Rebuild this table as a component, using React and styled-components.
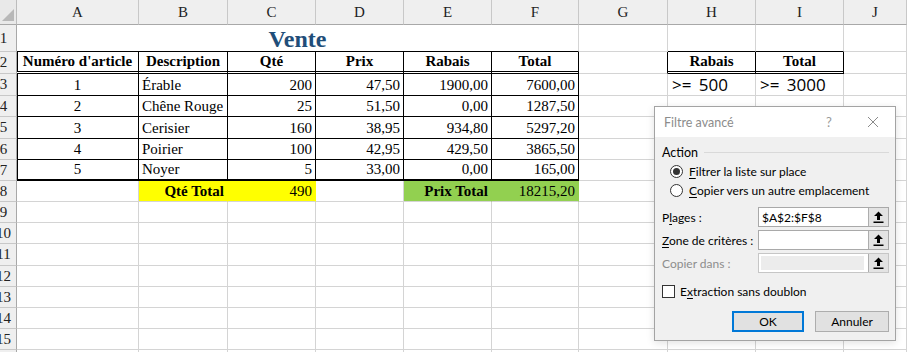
import React from 'react';
import styled, { createGlobalStyle } from 'styled-components';

const GlobalStyle = createGlobalStyle`
  body {
    margin: 0;
    overflow: hidden;
    background: #fff;
  }
`;

// row-header column, then A..I; J takes what is left
const COLS = [17, 122, 89, 88, 88, 88, 87, 89, 88, 88];
const ROWS = [25, 27, 22, 22, 21, 22, 21, 21, 21, 21, 21, 22, 21, 21, 21, 21, 21];
const LETTERS = ['A', 'B', 'C', 'D', 'E', 'F', 'G', 'H', 'I', 'J'];

const GRID = '#d4d4d4';
const INK = '#000';

const Screen = styled.div`
  position: relative;
  width: 907px;
  height: 352px;
  overflow: hidden;
`;

const Sheet = styled.div`
  display: grid;
  grid-template-columns: ${COLS.map((w) => `${w}px`).join(' ')} 1fr;
  grid-template-rows: ${ROWS.map((h) => `${h}px`).join(' ')};
  font-family: 'Liberation Serif', 'Times New Roman', serif;
  font-size: 15px;
  color: #000;
`;

const Corner = styled.div`
  box-sizing: border-box;
  background: #e9e9e9;
  border-right: 1px solid #bcbcbc;
  border-bottom: 1px solid #a8a8a8;
  display: flex;
  align-items: flex-end;
  justify-content: flex-end;
  padding: 0 2px 3px 0;
`;

const ColHead = styled.div`
  box-sizing: border-box;
  background: #efefef;
  border-right: 1px solid #c8c8c8;
  border-bottom: 1px solid #a8a8a8;
  display: flex;
  align-items: center;
  justify-content: center;
  color: #222;
  padding-top: 1px;
`;

const RowHead = styled.div`
  box-sizing: border-box;
  background: #efefef;
  border-right: 1px solid #a8a8a8;
  border-bottom: 1px solid #c8c8c8;
  overflow: hidden;
  display: flex;
  align-items: center;
  color: #222;

  span {
    display: block;
    flex-shrink: 0;
    width: 27px;
    margin-left: -10px;
    text-align: center;
  }
`;

const Cell = styled.div`
  box-sizing: border-box;
  grid-column: span ${(p) => p.$span || 1};
  display: flex;
  align-items: flex-end;
  justify-content: ${(p) =>
    p.$align === 'right' ? 'flex-end' : p.$align === 'center' ? 'center' : 'flex-start'};
  padding: 0 3px 1px;
  overflow: hidden;
  white-space: nowrap;
  background: ${(p) => p.$bg || '#fff'};
  border-right: 1px solid ${(p) => p.$r || GRID};
  border-bottom: ${(p) => p.$b || `1px solid ${GRID}`};
  box-shadow: ${(p) => (p.$l ? `inset 1px 0 0 ${INK}` : 'none')};
  font-weight: ${(p) => (p.$bold ? 700 : 400)};
`;

const Title = styled(Cell)`
  align-items: center;
  justify-content: center;
  padding: 2px 0 0;
  color: #1f4e79;
  font-size: 24px;
  font-weight: 700;
`;

const Criteria = styled(Cell)`
  font-family: 'Open Sans', 'Noto Sans', sans-serif;
  font-size: 17px;
  padding-left: 4px;
  padding-bottom: 0;
  align-items: center;
  word-spacing: 3px;
`;

const Tri = () => (
  <svg width="12" height="12" viewBox="0 0 12 12">
    <polygon points="12,0 12,12 0,12" fill="#b8b8b8" />
  </svg>
);

const head = ['Numéro d\'article', 'Description', 'Qté', 'Prix', 'Rabais', 'Total'];
const items = [
  ['1', 'Érable', '200', '47,50', '1900,00', '7600,00'],
  ['2', 'Chêne Rouge', '25', '51,50', '0,00', '1287,50'],
  ['3', 'Cerisier', '160', '38,95', '934,80', '5297,20'],
  ['4', 'Poirier', '100', '42,95', '429,50', '3865,50'],
  ['5', 'Noyer', '5', '33,00', '0,00', '165,00'],
];

const YELLOW = '#ffff00';
const GREEN = '#92d050';

// builds one spreadsheet row (row header + cells A..J)
function sheetRow(r) {
  const out = [
    <RowHead key={`h${r}`}>
      <span>{r}</span>
    </RowHead>,
  ];

  if (r === 1) {
    out.push(
      <Title key="t" $span={6} $b={`1px solid ${INK}`}>
        Vente
      </Title>
    );
    for (let c = 6; c < 10; c++) {
      const boxTop = c === 7 || c === 8;
      out.push(<Cell key={c} $b={boxTop ? `1px solid ${INK}` : undefined} />);
    }
    return out;
  }

  for (let c = 0; c < 10; c++) {
    const key = `${r}-${c}`;
    const inTable = r >= 2 && r <= 7 && c <= 5;

    if (inTable) {
      const row = r === 2 ? head : items[r - 3];
      const align = r === 2 || c === 0 ? 'center' : c === 1 ? 'left' : 'right';
      const b =
        r === 2 ? `3px double ${INK}` : r === 7 ? `2px solid ${INK}` : `1px solid ${INK}`;
      out.push(
        <Cell key={key} $align={align} $bold={r === 2} $r={INK} $b={b} $l={c === 0}>
          {row[c]}
        </Cell>
      );
      continue;
    }

    if (r === 8 && (c === 1 || c === 2)) {
      out.push(
        <Cell key={key} $align="right" $bold={c === 1} $bg={YELLOW} $r={YELLOW}>
          {c === 1 ? 'Qté Total' : '490'}
        </Cell>
      );
      continue;
    }
    if (r === 8 && (c === 4 || c === 5)) {
      out.push(
        <Cell key={key} $align="right" $bold={c === 4} $bg={GREEN} $r={GREEN}>
          {c === 4 ? 'Prix Total' : '18215,20'}
        </Cell>
      );
      continue;
    }

    if (r === 2 && (c === 6 || c === 7 || c === 8)) {
      if (c === 6) {
        out.push(<Cell key={key} $r={INK} />);
      } else {
        out.push(
          <Cell key={key} $align="center" $bold $r={INK} $b={`3px double ${INK}`}>
            {c === 7 ? 'Rabais' : 'Total'}
          </Cell>
        );
      }
      continue;
    }
    if (r === 3 && (c === 7 || c === 8)) {
      out.push(<Criteria key={key}>{c === 7 ? '>= 500' : '>= 3000'}</Criteria>);
      continue;
    }

    out.push(<Cell key={key} />);
  }
  return out;
}

/* ---- Filtre avancé dialog ---- */

const Dialog = styled.div`
  position: absolute;
  left: 654px;
  top: 106px;
  width: 242px;
  height: 235px;
  box-sizing: border-box;
  border: 1px solid #a3a3a3;
  background: #f0f0f0;
  box-shadow: 0 2px 8px rgba(0, 0, 0, 0.12);
  font-family: Lato, 'Open Sans', sans-serif;
  font-size: 12px;
  color: #000;
  display: flex;
  flex-direction: column;
`;

const TitleBar = styled.div`
  height: 30px;
  background: #fff;
  display: flex;
  align-items: center;
  padding: 0 0 0 9px;
  color: #8c8c8c;
  font-size: 12.5px;
`;

const TitleText = styled.div`
  flex: 1;
`;

const TitleIcon = styled.div`
  width: 44px;
  display: flex;
  justify-content: center;
  color: #9a9a9a;
  font-size: 13px;
`;

const Body = styled.div`
  flex: 1;
  display: flex;
  flex-direction: column;
  padding: 7px 6px 0 7px;
`;

const Group = styled.div`
  display: flex;
  align-items: center;
  gap: 6px;
  height: 16px;
  font-size: 12.5px;

  &::after {
    content: '';
    flex: 1;
    height: 1px;
    background: #d9d9d9;
  }
`;

const Options = styled.div`
  display: flex;
  flex-direction: column;
  gap: 3px;
  padding: 3px 0 0 8px;
`;

const Option = styled.label`
  display: flex;
  align-items: center;
  gap: 6px;
  height: 16px;
`;

const Radio = styled.span`
  box-sizing: border-box;
  width: 13px;
  height: 13px;
  border-radius: 50%;
  border: 1px solid #333;
  background: #fff;
  display: flex;
  align-items: center;
  justify-content: center;

  &::after {
    content: '';
    width: 7px;
    height: 7px;
    border-radius: 50%;
    background: ${(p) => (p.$on ? '#333' : 'transparent')};
  }
`;

const Fields = styled.div`
  display: flex;
  flex-direction: column;
  gap: 3px;
  margin-top: 9px;
`;

const Field = styled.div`
  display: flex;
  align-items: center;
  height: 20px;
`;

const Label = styled.div`
  width: 96px;
  white-space: nowrap;
  color: ${(p) => (p.$off ? '#8d8d8d' : '#000')};
`;

const Input = styled.div`
  box-sizing: border-box;
  flex: 1;
  height: 20px;
  display: flex;
  align-items: stretch;
  border: 1px solid ${(p) => (p.$off ? '#c6c6c6' : '#a9a9a9')};
  background: #fff;
`;

const InputText = styled.div`
  flex: 1;
  display: flex;
  align-items: center;
  padding-left: 3px;
  background: ${(p) => (p.$off ? '#ececec' : '#fff')};
  margin: ${(p) => (p.$off ? '2px 4px 2px 2px' : '0')};
`;

const PickButton = styled.div`
  box-sizing: border-box;
  width: 20px;
  display: flex;
  align-items: center;
  justify-content: center;
  background: #e3e3e3;
  border-left: 1px solid #adadad;
`;

const Check = styled.label`
  display: flex;
  align-items: center;
  gap: 5px;
  margin-top: 11px;
  height: 14px;
`;

const Box = styled.span`
  box-sizing: border-box;
  width: 13px;
  height: 13px;
  border: 1px solid #333;
  background: #fff;
`;

const Buttons = styled.div`
  display: flex;
  justify-content: flex-end;
  gap: 11px;
  margin-top: 13px;
`;

const Button = styled.div`
  box-sizing: border-box;
  width: ${(p) => (p.$primary ? '72px' : '74px')};
  height: 21px;
  display: flex;
  align-items: center;
  justify-content: center;
  background: #e1e1e1;
  border: ${(p) => (p.$primary ? '2px solid #0078d7' : '1px solid #adadad')};
`;

const U = styled.u`
  text-decoration-thickness: 1px;
  text-underline-offset: 2px;
`;

const UpArrow = () => (
  <svg width="11" height="12" viewBox="0 0 11 12">
    <path d="M5.5 0.5 L10 5 L7 5 L7 9 L4 9 L4 5 L1 5 Z" fill="#000" />
    <rect x="0.5" y="10.5" width="10" height="1.5" fill="#000" />
  </svg>
);

const Picker = ({ value, off }) => (
  <Input $off={off}>
    <InputText $off={off}>{value}</InputText>
    <PickButton>
      <UpArrow />
    </PickButton>
  </Input>
);

const FilterDialog = () => (
  <Dialog>
    <TitleBar>
      <TitleText>Filtre avancé</TitleText>
      <TitleIcon>?</TitleIcon>
      <TitleIcon>
        <svg width="12" height="12" viewBox="0 0 12 12">
          <path d="M1 1 L11 11 M11 1 L1 11" stroke="#8a8a8a" strokeWidth="1" />
        </svg>
      </TitleIcon>
    </TitleBar>
    <Body>
      <Group>Action</Group>
      <Options>
        <Option>
          <Radio $on />
          <span>
            <U>F</U>iltrer la liste sur place
          </span>
        </Option>
        <Option>
          <Radio />
          <span>
            <U>C</U>opier vers un autre emplacement
          </span>
        </Option>
      </Options>
      <Fields>
        <Field>
          <Label>
            P<U>l</U>ages :
          </Label>
          <Picker value="$A$2:$F$8" />
        </Field>
        <Field>
          <Label>
            <U>Z</U>one de critères :
          </Label>
          <Picker value="" />
        </Field>
        <Field>
          <Label $off>Copier dans :</Label>
          <Picker value="" off />
        </Field>
      </Fields>
      <Check>
        <Box />
        <span>
          E<U>x</U>traction sans doublon
        </span>
      </Check>
      <Buttons>
        <Button $primary>OK</Button>
        <Button>Annuler</Button>
      </Buttons>
    </Body>
  </Dialog>
);

export default function App() {
  const rows = [];
  for (let r = 1; r < ROWS.length; r++) rows.push(...sheetRow(r));

  return (
    <Screen>
      <GlobalStyle />
      <Sheet>
        <Corner>
          <Tri />
        </Corner>
        {LETTERS.map((l) => (
          <ColHead key={l}>{l}</ColHead>
        ))}
        {rows}
      </Sheet>
      <FilterDialog />
    </Screen>
  );
}
